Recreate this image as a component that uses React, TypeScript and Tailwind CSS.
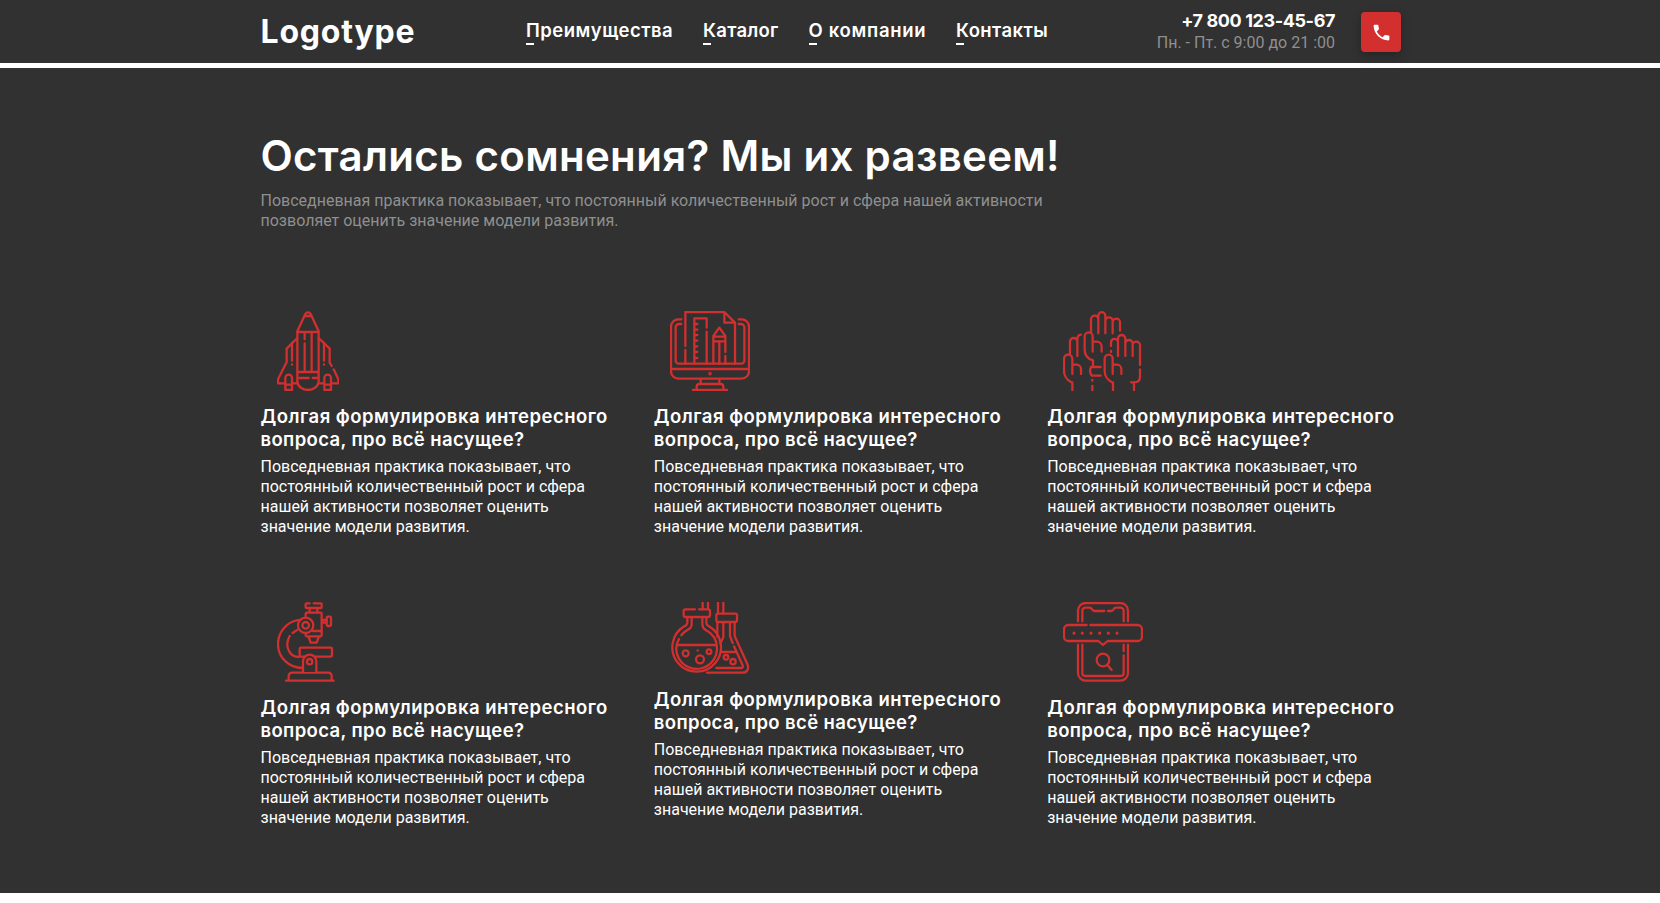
import React from "react";
import { MdPhone } from "react-icons/md";

type IconProps = { box: string; className: string; children: React.ReactNode };

function Icon({ box, className, children }: IconProps) {
  return (
    <svg
      viewBox={box}
      className={className}
      fill="none"
      stroke="#d32f2f"
      strokeWidth={6.8}
      strokeLinecap="round"
      strokeLinejoin="round"
    >
      {children}
    </svg>
  );
}

const Rocket = () => (
  <Icon box="51 33 186 240" className="h-20 w-[62px]">
    <path d="M112 94 136 42a9 9 0 0 1 16 0L176 94M137 48H151" />
    <path d="M112 96H176V244A32 26 0 0 1 112 244ZM112 216H176M134 96V118M134 130V216M155 96V216M118 234H146M158 234H171" />
    <path d="M112 114 80 146V186L54 238V250H74M96 128V182M96 193V194M97 250H112" />
    <path d="M176 114 209 146V188L215 198M221 208 235 238V250H214M192 128V182M192 193V194M176 250H191" />
    <path d="M76 270V234a10 10 0 0 1 20 0V270ZM76 254H96M193 270V234a10 10 0 0 1 20 0V270ZM193 254H213" />
  </Icon>
);

const Monitor = () => (
  <Icon box="45 33 240 240" className="size-20">
    <path d="M79 58H70A22 22 0 0 0 48 80V214A22 22 0 0 0 70 236H260A22 22 0 0 0 282 214V80A22 22 0 0 0 260 58H251" />
    <path d="M79 72H72A10 10 0 0 0 62 82V182A9 9 0 0 0 71 191H259A9 9 0 0 0 268 182V82A10 10 0 0 0 258 72H251M48 207H282" />
    <circle cx="165" cy="221" r="2" />
    <path d="M137 237V251M193 237V251M125 270V260a8 8 0 0 1 8-8H197a8 8 0 0 1 8 8V270M114 270H216" />
    <path d="M91 191V150M91 138V36H208L240 68V191M208 36V68H240" />
    <path d="M118 191V55H155V83M155 95V191M118 72H127M118 89H127M118 105H127M118 122H127M118 139H127M118 156H127M118 174H127" />
    <path d="M175 191V108L193 83 211 108V156M211 168V191M175 110H211M175 124H211M193 126V191" />
  </Icon>
);

const Hands = () => (
  <Icon box="39 33 240 240" className="size-20">
    <path d="M67 271V247H64C49 240 42 225 42 213V176a12.500 12.500 0 0 1 25 0V222M67 194H80a13 13 0 0 1 13 13V222" />
    <path d="M60 161V125a11 11 0 0 1 22 0V168M82 120C82 109 87 104 93 104" />
    <path d="M123 98V58a11 11 0 0 1 22 0V100M145 58V47a10.500 10.500 0 0 1 21 0V100M166 63a11 11 0 0 1 22 0V100M188 67a11 11 0 0 1 22 0V92" />
    <path d="M129 197V181C113 178 104 164 104 150V109a12 12 0 0 1 24 0V155M128 125H140a15 15 0 0 1 15 15V155" />
    <path d="M152 201H123C119 210 120 220 125 227H152M127 240V242M127 258V271" />
    <path d="M189 271V247H186C171 240 164 225 164 213V176a12 12 0 0 1 24 0V222M189 194H201a13 13 0 0 1 13 13V222" />
    <path d="M183 153V156M183 138V126a11 11 0 0 1 21 -3M204 168V116a11 11 0 0 1 22 0V168M226 131a11 11 0 0 1 22 0V168M248 136a11 11 0 0 1 22 0V195" />
    <path d="M270 208V231C270 242 262 247 252 247H243M252 247V271" />
  </Icon>
);

const Microscope = () => (
  <Icon box="51 36 174 240" className="h-20 w-[58px]">
    <path d="M78 272H221M86 272V258a10 10 0 0 1 10-10H205a10 10 0 0 1 10 10V272" />
    <rect x="119" y="173" width="97" height="27" rx="4" />
    <path d="M129 246V214a20 20 0 0 1 40 0V246" fill="#313131" />
    <circle cx="149" cy="215" r="8" />
    <path d="M114 90C76 97 54 130 54 163C54 203 87 234 128 234M89 138C80 154 79 170 88 185C95 197 107 202 119 200M98 129 113 119" />
    <path d="M137 84V71a3 3 0 0 1 3-3H182a3 3 0 0 1 3 3V134a5 5 0 0 1-5 5H142a5 5 0 0 1-5-5V129M158 123H185M146 141 152 158H170L176 141" />
    <circle cx="137" cy="106" r="23" fill="#313131" />
    <circle cx="137" cy="106" r="10" />
    <path d="M149 40H139a2 2 0 0 0-2 2V52a2 2 0 0 0 2 2H183a2 2 0 0 0 2-2V42a2 2 0 0 0-2-2H161M149 56V66M172 56V66M186 90H200M186 98H200" />
    <rect x="200" y="80" width="13" height="28" rx="4" />
  </Icon>
);

const Flasks = () => (
  <Icon box="45 36 240 216" className="h-[72px] w-20">
    <path d="M120 58H91a5 5 0 0 0-5 5V76a5 5 0 0 0 5 5H160a5 5 0 0 0 5-5V63a5 5 0 0 0-5-5H132M143 38V57M159 38V57" />
    <path d="M97 82V98C97 104 94 106 88 109A73 73 0 1 0 162 109C156 106 154 104 154 98V82" />
    <path d="M110 82V102C110 112 104 117 97 120C90 124 83 130 79 136M72 147C62 165 62 187 71 204A61 61 0 0 0 186 175C186 150 172 130 152 120C145 116 142 110 142 102V82M66 165H184" />
    <circle cx="92" cy="190" r="9" />
    <circle cx="135" cy="208" r="12" />
    <circle cx="162" cy="185" r="7" />
    <path d="M128 181V181.500" />
    <rect x="184" y="71" width="62" height="25" rx="5" />
    <path d="M189 38V70M205 38V70M187 97V140M205 97V142L196 160M225 97V138L233 159M239 97V138L277 222C283 236 276 248 263 248H156" />
    <path d="M237 169 263 226C265 231 263 234 259 234H184M200 186H243" />
    <circle cx="213" cy="202" r="7" />
    <circle cx="234" cy="215" r="8" />
  </Icon>
);

const PhoneSearch = () => (
  <Icon box="39 36 240 240" className="size-20">
    <path d="M110 105H55a13 13 0 0 0-13 13V140a13 13 0 0 0 13 13H145L159 165 173 153H263a13 13 0 0 0 13-13V118a13 13 0 0 0-13-13H121" />
    <path d="M72 129V129.500M97 129V129.500M123 129V129.500M149 129V129.500M175 129V129.500M201 129V129.500" strokeWidth={9} />
    <path d="M84 94V62A23 23 0 0 1 107 39H211A23 23 0 0 1 234 62V94M97 94V62A9 9 0 0 1 106 53H119C128 53 124 63 134 63H163M174 63H183C193 63 189 53 198 53H212A9 9 0 0 1 221 62V94" />
    <path d="M84 164V249A23 23 0 0 0 107 272H211A23 23 0 0 0 234 249V164M97 164V250A8 8 0 0 0 105 258H213A8 8 0 0 0 221 250V196M221 184V164" />
    <circle cx="159" cy="210" r="19" />
    <path d="M172 224 185 240" />
  </Icon>
);

const nav = [
  { label: "Преимущества", width: "w-[147px]", spacing: "tracking-[0.48px]" },
  { label: "Каталог", width: "w-[75.500px]", spacing: "tracking-[0.27px]" },
  { label: "О компании", width: "w-[117.500px]", spacing: "tracking-[0.7px]" },
  { label: "Контакты", width: "w-[92px]", spacing: "tracking-[0.4px]" },
];

const cards = [Rocket, Monitor, Hands, Microscope, Flasks, PhoneSearch];

export default function App() {
  return (
    <div className="h-[903px] overflow-hidden bg-white font-['Roboto',sans-serif] text-base leading-5 text-white">
      <header className="h-[63px] bg-[#313131]">
        <div className="flex h-full w-[1401px] items-start pl-[260.5px]">
          <a className="w-[265.5px] pt-[14px] font-['Inter',sans-serif] text-[32px] leading-9 font-bold tracking-[0.8px]">
            Logotype
          </a>
          <nav className="flex gap-[30px] pt-[19px] font-['Inter',sans-serif] text-[18.5px] leading-[23px] font-semibold whitespace-nowrap">
            {nav.map((n) => (
              <a key={n.label} className={n.width}>
                <span className={n.spacing}>{n.label}</span>
                <span className="mt-px block h-0.5 w-2 bg-white" />
              </a>
            ))}
          </nav>
          <div className="ml-auto flex flex-col items-end pt-[9px] whitespace-nowrap">
            <span className="font-['Inter',sans-serif] text-[18px] leading-[23px] font-bold tracking-[-0.4px]">
              +7 800 123-45-67
            </span>
            <span className="mt-px text-[#8f8f8f]">Пн. - Пт. с 9:00 до 21 :00</span>
          </div>
          <button className="mt-3 ml-[26px] flex size-10 shrink-0 items-center justify-center rounded bg-[#d32f2f] shadow-[0_4px_10px_rgba(0,0,0,0.25)]">
            <MdPhone className="size-[21px]" />
          </button>
        </div>
      </header>
      <main className="mt-[5px] h-[825px] bg-[#313131] pl-[260.5px]">
        <h1 className="pt-[63px] font-['Inter',sans-serif] text-[42px] leading-[50px] font-semibold tracking-[0.3px] whitespace-nowrap">
          Остались сомнения? Мы их развеем!
        </h1>
        <p className="mt-[10px] text-[#8f8f8f]">
          Повседневная практика показывает, что постоянный количественный рост и сфера нашей активности
          <br />
          позволяет оценить значение модели развития.
        </p>
        <div className="mt-20 grid w-[1180px] grid-cols-3 gap-y-[60px]">
          {cards.map((Art, i) => (
            <article key={i} className="h-[231px] whitespace-nowrap">
              <div className="pl-4 [&>svg]:block">
                <Art />
              </div>
              <h2 className="mt-[14px] font-['Inter',sans-serif] text-[18.5px] leading-[23px] font-semibold">
                <span className="block tracking-[0.48px]">Долгая формулировка интересного</span>
                <span className="block tracking-[0.38px]">вопроса, про всё насущее?</span>
              </h2>
              <p className="mt-[6px]">
                Повседневная практика показывает, что
                <br />
                постоянный количественный рост и сфера
                <br />
                нашей активности позволяет оценить
                <br />
                значение модели развития.
              </p>
            </article>
          ))}
        </div>
      </main>
    </div>
  );
}
